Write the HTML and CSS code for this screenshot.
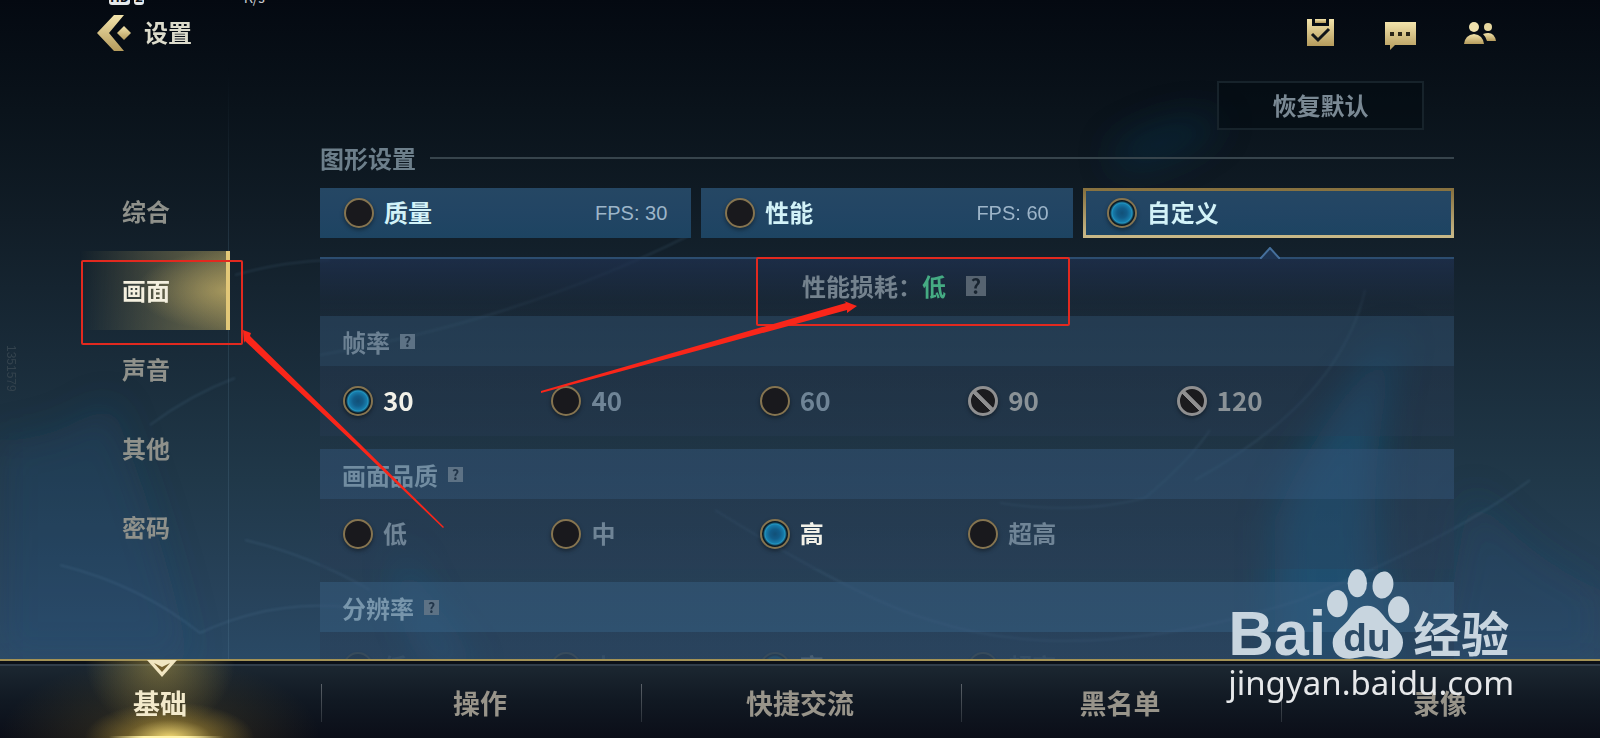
FILE: index.html
```html
<!DOCTYPE html>
<html lang="zh-CN">
<head>
    <meta charset="UTF-8">
    <meta name="viewport" content="width=device-width, initial-scale=1.0">
    <title>设置</title>
    <link rel="stylesheet" href="styles.css">
</head>
<body>
    <!-- Background swirls -->
    <svg class="backdrop" viewBox="0 0 1600 738" preserveAspectRatio="none" aria-hidden="true">
        <defs>
            <filter id="soft" x="-50%" y="-50%" width="200%" height="200%"><feGaussianBlur stdDeviation="18"/></filter>
            <filter id="thin"><feGaussianBlur stdDeviation="1"/></filter>
        </defs>
        <g filter="url(#soft)">
            <path d="M1400 330 Q1310 430 1275 520 L1275 670 L1400 670 Q1350 520 1400 330Z" fill="#1b6a9c" opacity=".45"/>
            <path d="M1110 150 Q1170 110 1225 120 Q1190 160 1120 170Z" fill="#0f4d78" opacity=".25"/>
            <path d="M0 440 Q60 440 110 400 Q160 520 190 660 L0 660Z" fill="#1d5c8c" opacity=".2"/>
            <path d="M400 540 Q420 610 475 670 L440 670 Q400 620 400 540Z" fill="#2a86bd" opacity=".35"/>
            <path d="M1470 490 Q1530 560 1600 590 L1600 660 L1440 660Z" fill="#2a4a78" opacity=".2"/>
        </g>
        <g filter="url(#thin)" fill="none" stroke="#7fb0d4" stroke-width="2" opacity=".12">
            <path d="M60 565 Q140 585 200 633 Q270 600 345 607"/>
            <path d="M245 540 Q310 555 370 590"/>
            <path d="M150 425 Q190 395 235 378"/>
            <path d="M715 510 Q860 600 930 620 Q1080 670 1300 600 Q1450 540 1530 480"/>
            <path d="M1365 290 Q1340 400 1195 480"/>
            <path d="M1000 503 Q1080 515 1145 498 Q1190 460 1210 430"/>
            <path d="M320 355 Q520 320 690 235"/>
            <path d="M235 275 Q280 262 330 260"/>
        </g>
    </svg>

    <div class="status-bar" aria-hidden="true">
        <span class="chip">HD</span>
        <span class="chip">2</span>
        <span class="speed">K/s</span>
    </div>

    <div class="screen">
        <header class="header">
            <button class="back-btn" aria-label="返回">
                <svg width="36" height="38" viewBox="0 0 36 38">
                    <defs>
                        <linearGradient id="gold" x1="0" y1="0" x2="0" y2="1">
                            <stop offset="0" stop-color="#f3e4ac"/>
                            <stop offset="1" stop-color="#b59b5c"/>
                        </linearGradient>
                    </defs>
                    <path d="M18 1h10L13 19l15 18H18L1 19z" fill="url(#gold)"/>
                    <path d="M28 12l7 7-7 7-7-7z" fill="url(#gold)"/>
                </svg>
            </button>
            <h1>设置</h1>
            <div class="header-icons">
                <button class="icon-btn" aria-label="任务">
                    <svg width="32" height="32" viewBox="0 0 32 32">
                        <path d="M3 2h5v7h17V2h5v27H3z" fill="url(#gold)"/>
                        <path d="M11 2h11v4H11z" fill="url(#gold)"/>
                        <path d="M8 17l6 6 11-11" fill="none" stroke="#11161a" stroke-width="3"/>
                    </svg>
                </button>
                <button class="icon-btn" aria-label="聊天">
                    <svg width="32" height="32" viewBox="0 0 32 32">
                        <path d="M1 5h31v23H11l-5 5v-5H1z" fill="url(#gold)"/>
                        <path d="M6 15h4v4H6zM14 15h4v4h-4zM22 15h4v4h-4z" fill="#2a2518"/>
                    </svg>
                </button>
                <button class="icon-btn" aria-label="好友">
                    <svg width="32" height="32" viewBox="0 0 32 32">
                        <circle cx="10" cy="10" r="5" fill="#f0e2ae"/>
                        <path d="M0 27q1-9 10-10 9 1 10 10z" fill="url(#gold)"/>
                        <circle cx="24" cy="10" r="4" fill="#e6d79f"/>
                        <path d="M19 17q11-4 13 7h-9q-1-4-4-7z" fill="url(#gold)"/>
                    </svg>
                </button>
            </div>
        </header>

        <div class="body">
            <nav class="sidebar">
                <button class="side-item">综合</button>
                <button class="side-item active">画面</button>
                <button class="side-item">声音</button>
                <button class="side-item">其他</button>
                <button class="side-item">密码</button>
            </nav>

            <main class="content">
                <button class="reset-btn">恢复默认</button>

                <h2 class="section-title">图形设置</h2>

                <div class="presets">
                    <label class="preset">
                        <input type="radio" class="radio" name="preset">
                        <span class="preset-name">质量</span>
                        <span class="preset-fps">FPS: 30</span>
                    </label>
                    <label class="preset">
                        <input type="radio" class="radio" name="preset">
                        <span class="preset-name">性能</span>
                        <span class="preset-fps">FPS: 60</span>
                    </label>
                    <label class="preset selected">
                        <input type="radio" class="radio" name="preset" checked>
                        <span class="preset-name">自定义</span>
                        <svg class="notch" width="20" height="12" viewBox="0 0 20 12">
                            <path d="M0 12L10 1l10 11z" fill="#1d3350"/>
                            <path d="M0 11h1L10 1l9 10h1" fill="none" stroke="#456f9c" stroke-width="2"/>
                        </svg>
                    </label>
                </div>

                <div class="panel">
                    <div class="cost">
                        性能损耗：<span class="cost-level">低</span>
                        <button class="help help-large" aria-label="说明">?</button>
                    </div>

                    <section class="group">
                        <h3>帧率 <button class="help" aria-label="帧率说明">?</button></h3>
                        <div class="options">
                            <label class="option"><input type="radio" class="radio" name="fps" checked><span>30</span></label>
                            <label class="option"><input type="radio" class="radio" name="fps"><span>40</span></label>
                            <label class="option"><input type="radio" class="radio" name="fps"><span>60</span></label>
                            <label class="option"><input type="radio" class="radio" name="fps" disabled><span>90</span></label>
                            <label class="option"><input type="radio" class="radio" name="fps" disabled><span>120</span></label>
                        </div>
                    </section>

                    <section class="group group-mid">
                        <h3>画面品质 <button class="help" aria-label="画面品质说明">?</button></h3>
                        <div class="options">
                            <label class="option"><input type="radio" class="radio" name="quality"><span>低</span></label>
                            <label class="option"><input type="radio" class="radio" name="quality"><span>中</span></label>
                            <label class="option"><input type="radio" class="radio" name="quality" checked><span>高</span></label>
                            <label class="option"><input type="radio" class="radio" name="quality"><span>超高</span></label>
                        </div>
                    </section>

                    <section class="group group-low">
                        <h3>分辨率 <button class="help" aria-label="分辨率说明">?</button></h3>
                        <div class="options faded">
                            <label class="option"><input type="radio" class="radio" name="res"><span>低</span></label>
                            <label class="option"><input type="radio" class="radio" name="res"><span>中</span></label>
                            <label class="option"><input type="radio" class="radio" name="res" checked><span>高</span></label>
                            <label class="option"><input type="radio" class="radio" name="res"><span>超高</span></label>
                        </div>
                    </section>
                </div>
            </main>
        </div>

        <nav class="tabs">
            <button class="tab active">
                <svg class="tab-marker" width="30" height="18" viewBox="0 0 30 18">
                    <path d="M0 0h30L15 17z" fill="#f1e6c2"/>
                    <path d="M7 3l8 4 8-4-8 9z" fill="#74602f"/>
                </svg>
                基础
            </button>
            <button class="tab">操作</button>
            <button class="tab">快捷交流</button>
            <button class="tab">黑名单</button>
            <button class="tab">录像</button>
        </nav>
    </div>

    <div class="device-id">1351579</div>

    <!-- Tutorial marks over the screen -->
    <svg class="marks" viewBox="0 0 1600 738" preserveAspectRatio="none" aria-hidden="true">
        <g fill="none" stroke="#e2291f" stroke-width="2">
            <rect x="82" y="261" width="160" height="83" rx="1"/>
            <rect x="757" y="258" width="312" height="67" rx="1"/>
        </g>
        <g fill="#f9261a">
            <path d="M243 330L251 333L250 336L358 442L444 527L443 528L355 444L245 341L244 343Z"/>
            <path d="M541 391L700 345L846 303L844 301L857 306L847 313L847 310L700 350L541 393Z"/>
        </g>
    </svg>

    <div class="watermark">
        <div class="watermark-logo">
            <span class="wm-bai">Bai</span>
            <svg class="wm-paw" width="84" height="92" viewBox="436 80 252 276">
                <g fill="#c8d5df">
                    <ellipse cx="470" cy="187" rx="31" ry="41"/>
                    <ellipse cx="530" cy="126" rx="29" ry="42"/>
                    <ellipse cx="607" cy="131" rx="31" ry="41" transform="rotate(10 607 131)"/>
                    <ellipse cx="654" cy="205" rx="32" ry="40"/>
                    <path d="M560 193C590 193 602 216 622 240C645 262 668 276 667 304C666 336 642 354 612 352C592 350 578 345 560 345C542 345 530 351 508 352C478 353 456 336 456 304C456 274 482 262 500 240C518 216 532 193 560 193Z"/>
                </g>
                <text x="559" y="328" text-anchor="middle" class="wm-du">du</text>
            </svg>
            <span class="wm-jingyan">经验</span>
        </div>
        <div class="watermark-url">jingyan.baidu.com</div>
    </div>
</body>
</html>
```

FILE: styles.css
```css
* {
    margin: 0;
    padding: 0;
    box-sizing: border-box;
}

body {
    position: relative;
    height: 100vh;
    overflow: hidden;
    font-family: 'Noto Sans CJK SC', sans-serif;
    color: #8496a3;
    background: linear-gradient(180deg, #040911 0%, #0a131b 15%, #111d27 30%, #192b39 48%, #203849 65%, #27425a 80%, #2a4a66 90%);
}

button {
    font: inherit;
    color: inherit;
    background: none;
    border: none;
    cursor: pointer;
}

.backdrop,
.marks {
    position: absolute;
    top: 0;
    left: 0;
    width: 100%;
    height: 100%;
}

.marks {
    pointer-events: none;
}

.screen {
    position: relative;
    height: 100%;
    display: flex;
    flex-direction: column;
}

/* Phone status bar, mostly cut off by the top edge */
.status-bar {
    position: absolute;
    top: -11px;
    left: 109px;
    display: flex;
    gap: 4px;
    font-size: 13px;
    line-height: 16px;
    font-weight: 700;
}

.chip {
    padding: 0 1px;
    border-radius: 3px;
    background: #e4e8ea;
    color: #0a0f14;
}

.speed {
    margin-left: 96px;
    font-size: 14px;
    line-height: 16px;
    font-weight: 400;
    color: #c9ced2;
}

/* Header */
.header {
    display: flex;
    align-items: center;
    height: 66px;
    padding: 0 104px 0 96px;
}

.back-btn,
.icon-btn {
    display: flex;
}

.header h1 {
    margin-left: 12px;
    padding-bottom: 2px;
    font-size: 24px;
    line-height: 32px;
    font-weight: 700;
    color: #dcdbcb;
}

.header-icons {
    display: flex;
    gap: 48px;
    margin-left: auto;
}

.icon-btn svg {
    overflow: visible;
}

/* Main area */
.body {
    flex: 1;
    min-height: 0;
    display: flex;
    gap: 90px;
    padding-right: 146px;
}

.sidebar {
    flex: none;
    width: 230px;
    padding: 106px 0 0 80px;
    background: linear-gradient(180deg, transparent, rgba(110, 150, 175, 0.18) 30%, rgba(110, 150, 175, 0.18)) 228px 0 / 1px 100% no-repeat;
}

.side-item {
    display: block;
    width: 100%;
    height: 79px;
    padding: 0 18px 2px 0;
    font-size: 24px;
    font-weight: 700;
    color: #8f918b;
}

.side-item.active {
    color: #f4f0df;
    border-right: 4px solid #e3c878;
    padding-right: 14px;
    background:
        radial-gradient(ellipse 90px 40px at 100% 50%, rgba(214, 190, 110, 0.55), transparent),
        linear-gradient(90deg, rgba(110, 110, 80, 0), rgba(120, 115, 80, 0.45) 50%, rgba(140, 130, 82, 0.7));
}

.content {
    flex: 1;
    min-width: 0;
    display: flex;
    flex-direction: column;
}

.reset-btn {
    align-self: flex-end;
    flex: none;
    width: 207px;
    height: 49px;
    margin: 15px 30px 0 0;
    padding-bottom: 2px;
    border: 2px solid #17232b;
    background: rgba(2, 10, 16, 0.5);
    font-size: 24px;
    line-height: 32px;
    font-weight: 700;
    color: #7a8994;
}

.section-title {
    display: flex;
    align-items: center;
    gap: 14px;
    margin: 9px 0 11px;
    font-size: 24px;
    line-height: 38px;
    font-weight: 700;
    color: #6d7f8b;
}

.section-title::after {
    content: '';
    flex: 1;
    height: 2px;
    background: #37444c;
}

.presets {
    display: grid;
    grid-template-columns: repeat(3, 1fr);
    gap: 10px;
}

.preset {
    position: relative;
    display: flex;
    align-items: center;
    height: 50px;
    padding: 0 24px;
    background: linear-gradient(180deg, #254764, #224564 50%, #1d4462);
}

.preset.selected {
    border: 3px solid;
    border-image: linear-gradient(180deg, #87713f, #c8b887) 1;
    padding: 0 21px;
}

.preset-name {
    margin-left: 10px;
    padding-bottom: 2px;
    font-size: 24px;
    line-height: 32px;
    font-weight: 700;
    color: #d2f2f8;
}

.preset-fps {
    margin-left: auto;
    font-family: 'Liberation Sans', Arial, sans-serif;
    font-size: 20px;
    color: #9db5c9;
}

.notch {
    position: absolute;
    left: 50%;
    bottom: -24px;
    margin-left: -8px;
    z-index: 1;
}

/* Radio buttons */
.radio {
    appearance: none;
    flex: none;
    width: 30px;
    height: 30px;
    border: 2px solid #857450;
    border-radius: 50%;
    background: #19191d;
    box-shadow: 0 2px 4px rgba(0, 0, 0, 0.4);
}

.radio:checked {
    background: radial-gradient(circle, #115078 0, #125d8a 5px, #177cab 9px, #2294c0 10px, #0b1a24 12px);
}

.radio:disabled {
    border: 3px solid #8f8f90;
    background: linear-gradient(45deg, #1b1b1e 44%, #8f8f90 45%, #8f8f90 56%, #1b1b1e 57%);
}

/* Settings panel */
.panel {
    flex: 1;
    min-height: 0;
    margin-top: 19px;
    overflow: hidden;
    border-top: 2px solid #2c4d70;
    background: linear-gradient(180deg, rgba(32, 50, 82, 0.7), rgba(28, 42, 60, 0.5) 40px, rgba(40, 55, 75, 0.15) 60px);
}

.cost {
    display: flex;
    align-items: center;
    justify-content: center;
    height: 57px;
    padding: 0 0 4px 14px;
    font-size: 24px;
    font-weight: 700;
    color: #74828e;
}

.cost-level {
    color: #45ab83;
}

.help {
    width: 15px;
    height: 15px;
    background: #5d7285;
    color: #22364a;
    font-size: 14px;
    line-height: 14px;
    font-weight: 700;
}

.help-large {
    width: 20px;
    height: 20px;
    margin-left: 20px;
    background: #566370;
    color: #182430;
    font-size: 20px;
    line-height: 18px;
}

.group {
    margin-bottom: 13px;
    background: rgba(42, 62, 90, 0.3);
}

.group h3 {
    display: flex;
    align-items: center;
    gap: 10px;
    height: 50px;
    padding: 0 22px;
    font-size: 24px;
    font-weight: 700;
    color: #6c8193;
    background: rgba(55, 96, 128, 0.26);
}

.group-mid h3 {
    color: #718ca1;
    background: rgba(55, 98, 136, 0.34);
}

.group-low h3 {
    color: #7896ac;
    background: rgba(60, 108, 146, 0.36);
}

.options {
    display: grid;
    grid-template-columns: repeat(5, 1fr);
    align-items: center;
    height: 70px;
    padding: 0 69px 0 23px;
}

.options.faded {
    opacity: 0.15;
}

.option {
    display: flex;
    align-items: center;
    gap: 10px;
    font-size: 24px;
    line-height: 32px;
    font-weight: 700;
    color: #6f8496;
}

.option span {
    padding-bottom: 3px;
}

.option .radio:checked + span {
    color: #f2f1e8;
}

.option .radio:disabled + span {
    color: #8a9297;
}

.option .radio[name="fps"] + span {
    font-size: 26px;
}

/* Bottom tabs */
.tabs {
    flex: none;
    display: grid;
    grid-template-columns: repeat(5, 1fr);
    height: 79px;
    border-top: 2px solid #a39256;
    box-shadow: inset 0 3px #0b1017, inset 0 5px #303d4a;
    background: linear-gradient(180deg, #1d2933, #111923 50%, #0b0e18);
}

.tab {
    position: relative;
    padding-top: 6px;
    font-size: 27px;
    line-height: 36px;
    font-weight: 700;
    color: #98948a;
}

.tab + .tab::before {
    content: '';
    position: absolute;
    left: 1px;
    top: 23px;
    width: 1px;
    height: 38px;
    background: linear-gradient(180deg, #5a6168, #2a3038);
}

.tab.active {
    color: #f2e9cb;
    background:
        linear-gradient(90deg, transparent 34%, #fff3a8 45%, #fff3a8 58%, transparent 70%) bottom / 100% 2px no-repeat,
        radial-gradient(ellipse 85px 36px at 53% 100%, rgba(255, 228, 120, 0.95), rgba(200, 165, 60, 0.4) 50%, transparent),
        radial-gradient(ellipse 75px 70px at 50% 0, rgba(190, 165, 75, 0.5), transparent),
        radial-gradient(ellipse 160px 80px at 50% 100%, rgba(130, 105, 40, 0.35), transparent);
}

.tab-marker {
    position: absolute;
    left: 50%;
    top: -1px;
    margin-left: -13px;
}

.device-id {
    position: absolute;
    left: 4px;
    top: 345px;
    writing-mode: vertical-rl;
    font-family: 'Liberation Sans', Arial, sans-serif;
    font-size: 12px;
    line-height: 14px;
    color: #33424d;
}

/* Watermark */
.watermark {
    position: absolute;
    right: 86px;
    bottom: 32px;
    color: #c8d5df;
}

.watermark-logo {
    display: flex;
    align-items: flex-end;
}

.wm-bai {
    font-family: 'Liberation Sans', Arial, sans-serif;
    font-size: 63px;
    line-height: 54px;
    font-weight: 700;
}

.wm-du {
    font-family: 'Liberation Sans', Arial, sans-serif;
    font-size: 116px;
    font-weight: 700;
    fill: #2b4a66;
}

.wm-jingyan {
    margin-left: 3px;
    font-size: 48px;
    line-height: 58px;
    font-weight: 700;
}

.watermark-url {
    font-family: 'Noto Sans', sans-serif;
    font-size: 33px;
    line-height: 46px;
    color: #e6e8ea;
}
```
